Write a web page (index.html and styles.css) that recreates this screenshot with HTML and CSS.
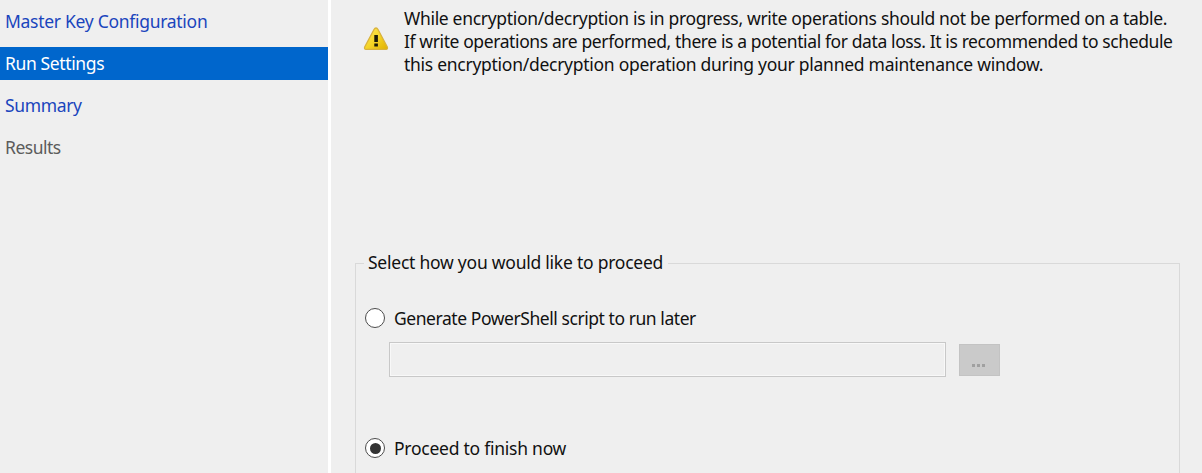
FILE: index.html
```html
<!DOCTYPE html>
<html lang="en">
<head>
<meta charset="utf-8">
<title>Run Settings</title>
<link rel="stylesheet" href="styles.css">
</head>
<body>
<div class="wizard">
  <nav class="steps">
    <a class="step"><span class="t-master">Master Key Configuration</span></a>
    <a class="step step-active"><span class="t-run">Run Settings</span></a>
    <a class="step"><span class="t-summary">Summary</span></a>
    <a class="step step-disabled"><span class="t-results">Results</span></a>
  </nav>
  <main class="content">
    <section class="warning">
      <svg class="warning-icon" width="26" height="25" viewBox="0 0 26 25">
        <defs>
          <linearGradient id="gold" x1="0" y1="0" x2="1" y2="1">
            <stop offset="0" stop-color="#fbe562"/>
            <stop offset=".5" stop-color="#f6d628"/>
            <stop offset="1" stop-color="#e0b000"/>
          </linearGradient>
        </defs>
        <path d="M13 2 Q14.2 2 15 3.5 L24.3 21 Q25 23.3 23 23.3 H3 Q1 23.3 1.7 21 L11 3.5 Q11.8 2 13 2Z" fill="url(#gold)" stroke="#d9b23c" stroke-width="1.3"/>
        <path d="M11.3 9h3.6v7h-3.6z M11.3 17.6h3.6v2.9h-3.6z" fill="#1c1a08"/>
      </svg>
      <p class="warning-text">
        <span class="line t-w1">While encryption/decryption is in progress, write operations should not be performed on a table.</span>
        <span class="line t-w2">If write operations are performed, there is a potential for data loss. It is recommended to schedule</span>
        <span class="line t-w3">this encryption/decryption operation during your planned maintenance window.</span>
      </p>
    </section>
    <fieldset class="group">
      <legend class="legend"><span class="t-legend">Select how you would like to proceed</span></legend>
      <label class="option">
        <span class="radio"></span>
        <span class="t-generate">Generate PowerShell script to run later</span>
      </label>
      <div class="path-row">
        <div class="path-input"></div>
        <div class="browse"><i class="dot"></i><i class="dot"></i><i class="dot"></i></div>
      </div>
      <label class="option">
        <span class="radio radio-checked"></span>
        <span class="t-proceed">Proceed to finish now</span>
      </label>
    </fieldset>
  </main>
</div>
</body>
</html>
```
FILE: styles.css
```css
* { box-sizing: border-box; }
body {
  margin: 0;
  background: #efefef;
  color: #111;
  font: 17.5px/23px "Noto Sans", "Open Sans", sans-serif;
}
.wizard { display: flex; height: 473px; overflow: hidden; }
.steps {
  width: 331px;
  flex: none;
  border-right: 3px solid #fff;
  padding-top: 5px;
}
.step {
  display: flex;
  align-items: center;
  height: 33px;
  margin-bottom: 9px;
  padding-left: 5px;
  color: #1a45bd;
  white-space: nowrap;
}
.step-active { background: #0066cc; color: #fff; }
.step-disabled { color: #5c5c5c; }
.content { flex: 1; padding-left: 24px; }
.warning { display: flex; height: 250px; padding-top: 7px; }
.warning-icon { flex: none; margin: 19px 0 0 8px; }
.warning-text { margin: 0 0 0 15px; }
.line { display: block; white-space: nowrap; }
.group {
  width: 825px;
  height: 260px;
  margin: 0;
  padding: 30px 0 0 8px;
  border: 1px solid #d9d9d9;
}
.legend { height: 26px; padding: 0 5px 0 4px; line-height: 24px; white-space: nowrap; }
.option { display: flex; align-items: center; height: 24px; white-space: nowrap; }
.radio {
  display: flex;
  align-items: center;
  justify-content: center;
  width: 20px;
  height: 20px;
  margin: 0 9px 0 1px;
  border: 1.5px solid #4c4c4c;
  border-radius: 50%;
  background: #fff;
}
.radio-checked::after {
  content: "";
  width: 11px;
  height: 11px;
  border-radius: 50%;
  background: #333;
}
.path-row { display: flex; gap: 13px; margin: 12px 0 59px 25px; }
.path-input { width: 557px; height: 35px; border: 1px solid #c8c8c8; box-shadow: inset 0 0 0 1px #f8f8f8; }
.browse {
  display: flex;
  align-items: center;
  justify-content: center;
  gap: 2px;
  width: 41px;
  height: 32px;
  margin-top: 2px;
  padding: 10px 2px 0 0;
  border: 1px solid #c3c3c3;
  background: #cacaca;
}
.dot { width: 3px; height: 3px; background: #a0a0a0; }

/* Tracking per label */
.t-master { letter-spacing: -.29px; }
.t-run { letter-spacing: -.37px; }
.t-summary { letter-spacing: -.35px; }
.t-results { letter-spacing: -.5px; }
.t-w1 { letter-spacing: -.32px; }
.t-w2 { letter-spacing: -.395px; }
.t-w3 { letter-spacing: -.275px; }
.t-legend { letter-spacing: -.24px; }
.t-generate { letter-spacing: -.44px; }
.t-proceed { letter-spacing: -.25px; }
```
